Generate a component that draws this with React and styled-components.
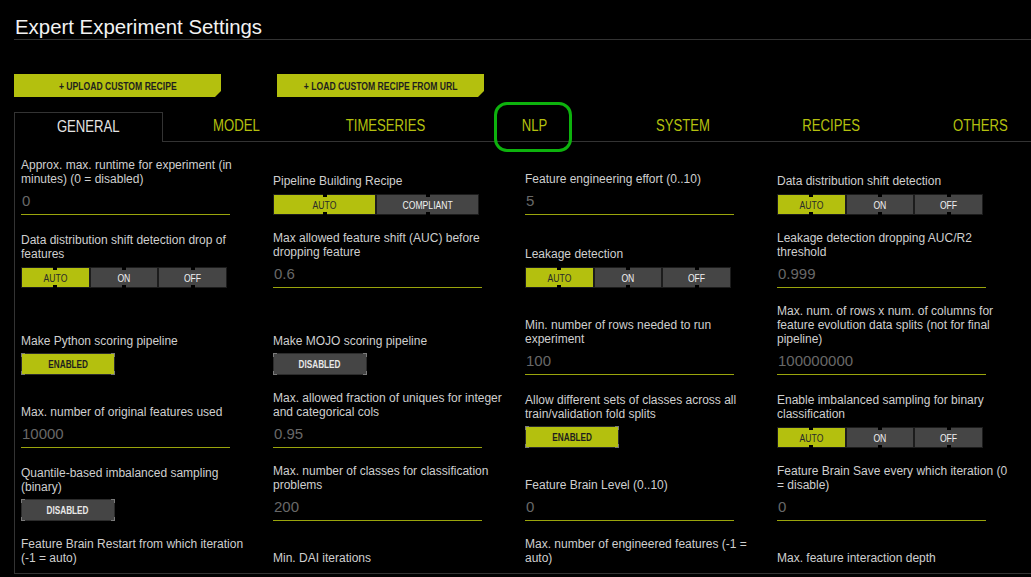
import React from "react";
import styled, { createGlobalStyle, css } from "styled-components";

const LIME = "#b4c00e";

const Global = createGlobalStyle`
  html, body { margin: 0; padding: 0; background: #000; overflow: hidden; }
  body { font-family: "Liberation Sans", Arial, sans-serif; color: #ccc; }
  * { box-sizing: border-box; }
`;

const Page = styled.div`
  width: 1031px;
  overflow: hidden;
  padding-left: 14px;
`;

const Header = styled.div`
  margin-top: 15px;
  border-bottom: 1px solid #333;
`;

const Title = styled.h1`
  margin: 0;
  padding-left: 1px;
  font-size: 20.4px;
  line-height: 24px;
  font-weight: normal;
  color: #f2f2f2;
`;

const Narrow = styled.span`
  display: inline-block;
  white-space: nowrap;
  transform: scaleX(${(p) => p.$x || 0.82});
`;

const ButtonRow = styled.div`
  display: flex;
  gap: 56px;
  margin-top: 34px;
`;

const RecipeButton = styled.button`
  width: 207px;
  height: 23px;
  border: none;
  padding: 0;
  background: ${LIME};
  color: #1e1e1e;
  font-family: "Liberation Sans", Arial, sans-serif;
  font-weight: bold;
  font-size: 10.5px;
  clip-path: polygon(0 0, 100% 0, 100% calc(100% - 6px), calc(100% - 6px) 100%, 0 100%);
  cursor: pointer;
`;

const Tabs = styled.div`
  display: grid;
  grid-template-columns: repeat(7, 148.6px);
  margin-top: 15px;
`;

const Tab = styled.div`
  position: relative;
  height: 30px;
  display: flex;
  align-items: center;
  justify-content: center;
  padding-bottom: 2px;
  font-size: 16px;
  ${(p) =>
    p.$active
      ? css`
          border: 1px solid #333;
          border-bottom: none;
          color: #e4e4e4;
        `
      : css`
          border-bottom: 1px solid #333;
          color: ${LIME};
        `}
`;

const Highlight = styled.span`
  position: absolute;
  left: 34px;
  top: -10px;
  width: 78px;
  height: 50px;
  border: 3.5px solid #0db20d;
  border-radius: 13px;
  pointer-events: none;
`;

const Panel = styled.div`
  width: 1040px;
  height: 432px;
  overflow: hidden;
  border-left: 1px solid #333;
  border-bottom: 1px solid #333;
  padding: 16px 0 0 6px;
`;

const Grid = styled.div`
  display: grid;
  grid-template-columns: repeat(4, 232px);
  column-gap: 20px;
  row-gap: 16px;
  align-items: end;
`;

const Cell = styled.div`
  display: flex;
  flex-direction: column;
`;

const Label = styled.div`
  font-size: 12px;
  line-height: 14px;
  color: #cfcfcf;
  white-space: nowrap;
`;

const Input = styled.div`
  width: 209px;
  height: 29px;
  display: flex;
  align-items: center;
  padding-left: 1px;
  font-size: 15px;
  color: #686868;
  border-bottom: 1px solid #9aa50c;
`;

const Toggle = styled.div`
  display: flex;
  width: 206px;
  height: 21px;
  margin-top: 6px;
`;

const Segment = styled.div`
  position: relative;
  flex: 1;
  display: flex;
  align-items: center;
  justify-content: center;
  font-size: 10.5px;
  border: 1px solid #1c1c1c;
  background: ${(p) => (p.$on ? LIME : "#454545")};
  color: ${(p) => (p.$on ? "#2a2a2a" : "#f0f0f0")};
  &::before,
  &::after {
    content: "";
    position: absolute;
    left: 50%;
    width: 4px;
    height: 3px;
    margin-left: -2px;
    background: #000;
  }
  &::before { top: -1px; }
  &::after { bottom: -1px; }
`;

const corner = (c) => `
  linear-gradient(${c},${c}) left top / 4px 1px no-repeat,
  linear-gradient(${c},${c}) left top / 1px 4px no-repeat,
  linear-gradient(${c},${c}) right top / 4px 1px no-repeat,
  linear-gradient(${c},${c}) right top / 1px 4px no-repeat,
  linear-gradient(${c},${c}) left bottom / 4px 1px no-repeat,
  linear-gradient(${c},${c}) left bottom / 1px 4px no-repeat,
  linear-gradient(${c},${c}) right bottom / 4px 1px no-repeat,
  linear-gradient(${c},${c}) right bottom / 1px 4px no-repeat
`;

const Switch = styled.div`
  position: relative;
  width: 94px;
  height: 22px;
  margin-top: 5px;
  display: flex;
  align-items: center;
  justify-content: center;
  font-weight: bold;
  font-size: 10px;
  border: 1px solid #2c2c2c;
  background: ${(p) => (p.$on ? LIME : "#454545")};
  color: ${(p) => (p.$on ? "#1e1e1e" : "#e8e8e8")};
  &::before {
    content: "";
    position: absolute;
    inset: -1px;
    background: ${corner("#7a7a7a")};
    pointer-events: none;
  }
`;

const TABS = ["GENERAL", "MODEL", "TIMESERIES", "NLP", "SYSTEM", "RECIPES", "OTHERS"];
const TRI = ["AUTO", "ON", "OFF"];

const FIELDS = [
  { t: "input", l: ["Approx. max. runtime for experiment (in", "minutes) (0 = disabled)"], v: "0" },
  { t: "toggle", l: ["Pipeline Building Recipe"], o: ["AUTO", "COMPLIANT"] },
  { t: "input", l: ["Feature engineering effort (0..10)"], v: "5" },
  { t: "toggle", l: ["Data distribution shift detection"], o: TRI },

  { t: "toggle", l: ["Data distribution shift detection drop of", "features"], o: TRI },
  { t: "input", l: ["Max allowed feature shift (AUC) before", "dropping feature"], v: "0.6" },
  { t: "toggle", l: ["Leakage detection"], o: TRI },
  { t: "input", l: ["Leakage detection dropping AUC/R2", "threshold"], v: "0.999" },

  { t: "switch", l: ["Make Python scoring pipeline"], on: true },
  { t: "switch", l: ["Make MOJO scoring pipeline"], on: false },
  { t: "input", l: ["Min. number of rows needed to run", "experiment"], v: "100" },
  {
    t: "input",
    l: ["Max. num. of rows x num. of columns for", "feature evolution data splits (not for final", "pipeline)"],
    v: "100000000",
  },

  { t: "input", l: ["Max. number of original features used"], v: "10000" },
  { t: "input", l: ["Max. allowed fraction of uniques for integer", "and categorical cols"], v: "0.95" },
  { t: "switch", l: ["Allow different sets of classes across all", "train/validation fold splits"], on: true },
  { t: "toggle", l: ["Enable imbalanced sampling for binary", "classification"], o: TRI },

  { t: "switch", l: ["Quantile-based imbalanced sampling", "(binary)"], on: false },
  { t: "input", l: ["Max. number of classes for classification", "problems"], v: "200" },
  { t: "input", l: ["Feature Brain Level (0..10)"], v: "0" },
  { t: "input", l: ["Feature Brain Save every which iteration (0", "= disable)"], v: "0" },

  { t: "input", l: ["Feature Brain Restart from which iteration", "(-1 = auto)"], v: "" },
  { t: "input", l: ["Min. DAI iterations"], v: "" },
  { t: "input", l: ["Max. number of engineered features (-1 =", "auto)"], v: "" },
  { t: "input", l: ["Max. feature interaction depth"], v: "" },
];

function Field({ f }) {
  return (
    <Cell>
      <Label>
        {f.l.map((line, i) => (
          <React.Fragment key={i}>
            {i > 0 && <br />}
            {line}
          </React.Fragment>
        ))}
      </Label>
      {f.t === "input" && <Input>{f.v}</Input>}
      {f.t === "toggle" && (
        <Toggle>
          {f.o.map((o, i) => (
            <Segment key={o} $on={i === 0}>
              <Narrow>{o}</Narrow>
            </Segment>
          ))}
        </Toggle>
      )}
      {f.t === "switch" && (
        <Switch $on={f.on}>
          <Narrow>{f.on ? "ENABLED" : "DISABLED"}</Narrow>
        </Switch>
      )}
    </Cell>
  );
}

export default function App() {
  return (
    <>
      <Global />
      <Page>
        <Header>
          <Title>Expert Experiment Settings</Title>
        </Header>
        <ButtonRow>
          <RecipeButton>
            <Narrow>+ UPLOAD CUSTOM RECIPE</Narrow>
          </RecipeButton>
          <RecipeButton>
            <Narrow>+ LOAD CUSTOM RECIPE FROM URL</Narrow>
          </RecipeButton>
        </ButtonRow>
        <Tabs>
          {TABS.map((t, i) => (
            <Tab key={t} $active={i === 0}>
              <Narrow>{t}</Narrow>
              {t === "NLP" && <Highlight />}
            </Tab>
          ))}
        </Tabs>
        <Panel>
          <Grid>
            {FIELDS.map((f, i) => (
              <Field key={i} f={f} />
            ))}
          </Grid>
        </Panel>
      </Page>
    </>
  );
}
